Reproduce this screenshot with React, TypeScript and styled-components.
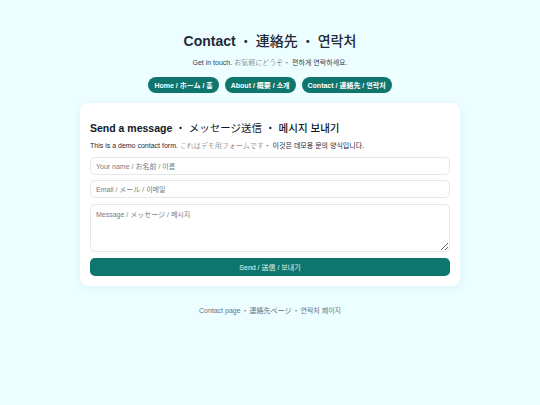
import React from "react"
import styled, { createGlobalStyle } from "styled-components"

const FONT = `"Liberation Sans", Arial, "Noto Sans CJK JP", "Noto Sans CJK KR", sans-serif`

const GlobalStyle = createGlobalStyle`
  html, body {
    margin: 0;
    padding: 0;
    background: #ecfeff;
  }
  body {
    font-family: ${FONT};
    color: #1f2937;
  }
  * { box-sizing: border-box; }
`

const Page = styled.div`
  width: 540px;
  min-height: 405px;
  display: flex;
  flex-direction: column;
  align-items: center;
  padding-top: 31px;
`

const Title = styled.h1`
  margin: 0;
  font-size: 14px;
  line-height: 20px;
  font-weight: 700;
  color: #1f2937;
`

const Subtitle = styled.p`
  margin: 7px 0 0;
  font-size: 7px;
  line-height: 10px;
  color: #374151;
`

const Nav = styled.nav`
  display: flex;
  gap: 6px;
  margin-top: 9px;
`

const Pill = styled.a`
  display: flex;
  align-items: center;
  height: 16px;
  padding: 0 6px;
  border-radius: 999px;
  background: #0f766e;
  color: #ffffff;
  font-size: 7px;
  font-weight: 700;
  text-decoration: none;
`

const Card = styled.section`
  width: 380px;
  margin-top: 10px;
  background: #ffffff;
  border-radius: 8px;
  box-shadow: 0 2px 8px rgba(15, 118, 110, 0.08);
  padding: 18px 10px 10px;
  display: flex;
  flex-direction: column;
`

const CardTitle = styled.h2`
  margin: 0;
  font-size: 10.5px;
  line-height: 14px;
  font-weight: 700;
  color: #111827;
`

const Cjk = styled.span<{ $weight?: number }>`
  font-weight: ${(p) => p.$weight ?? 400};
`

const Lead = styled.p`
  margin: 6px 0 0;
  font-size: 7px;
  line-height: 10px;
  color: #1f2937;
`

const LeadJa = styled.span`
  color: #4b5563;
  font-weight: 300;
`

const Form = styled.form`
  display: flex;
  flex-direction: column;
  gap: 5px;
  margin-top: 6px;
`

const Input = styled.input`
  height: 18px;
  border: 1px solid #e5e7eb;
  border-radius: 5px;
  padding: 0 5px;
  font-family: ${FONT};
  font-size: 7px;
  color: #1f2937;
  background: #fff;
  &::placeholder { color: #777c85; }
`

const TextArea = styled.textarea`
  height: 48px;
  border: 1px solid #e5e7eb;
  border-radius: 5px;
  padding: 4px 5px;
  font-family: ${FONT};
  font-size: 7px;
  color: #1f2937;
  resize: vertical;
  margin-top: 1px;
  &::placeholder { color: #777c85; }
`

const SendButton = styled.button`
  height: 18px;
  margin-top: 1px;
  border: none;
  border-radius: 5px;
  background: #0f766e;
  color: #e6f6f4;
  font-family: ${FONT};
  font-size: 7px;
  cursor: pointer;
`

const Footer = styled.footer`
  margin-top: 20px;
  font-size: 7px;
  line-height: 10px;
  color: #6b7280;
`

const Dot = styled.span<{ $gap?: number }>`
  margin: 0 ${(p) => p.$gap ?? 3}px;
  font-weight: 400;
`

export default function App() {
  return (
    <>
      <GlobalStyle />
      <Page>
        <Title>
          Contact<Dot>・</Dot>
          <Cjk $weight={500}>連絡先</Cjk>
          <Dot>・</Dot>
          <Cjk $weight={500}>연락처</Cjk>
        </Title>
        <Subtitle>
          Get in touch. <LeadJa>お気軽にどうぞ・</LeadJa> 편하게 연락하세요.
        </Subtitle>
        <Nav>
          <Pill href="#">Home / ホーム / 홈</Pill>
          <Pill href="#">About / 概要 / 소개</Pill>
          <Pill href="#">Contact / 連絡先 / 연락처</Pill>
        </Nav>
        <Card>
          <CardTitle>
            Send a message<Dot>・</Dot>
            <Cjk>メッセージ送信</Cjk>
            <Dot>・</Dot>
            <Cjk $weight={500}>메시지 보내기</Cjk>
          </CardTitle>
          <Lead>
            This is a demo contact form. <LeadJa>これはデモ用フォームです・</LeadJa> 이것은 데모용 문의 양식입니다.
          </Lead>
          <Form onSubmit={(e) => e.preventDefault()}>
            <Input placeholder="Your name / お名前 / 이름" />
            <Input placeholder="Email / メール / 이메일" />
            <TextArea placeholder="Message / メッセージ / 메시지" />
            <SendButton type="submit">Send / 送信 / 보내기</SendButton>
          </Form>
        </Card>
        <Footer>
          Contact page<Dot $gap={1}>・</Dot>連絡先ページ<Dot $gap={1}>・</Dot>연락처 페이지
        </Footer>
      </Page>
    </>
  )
}
